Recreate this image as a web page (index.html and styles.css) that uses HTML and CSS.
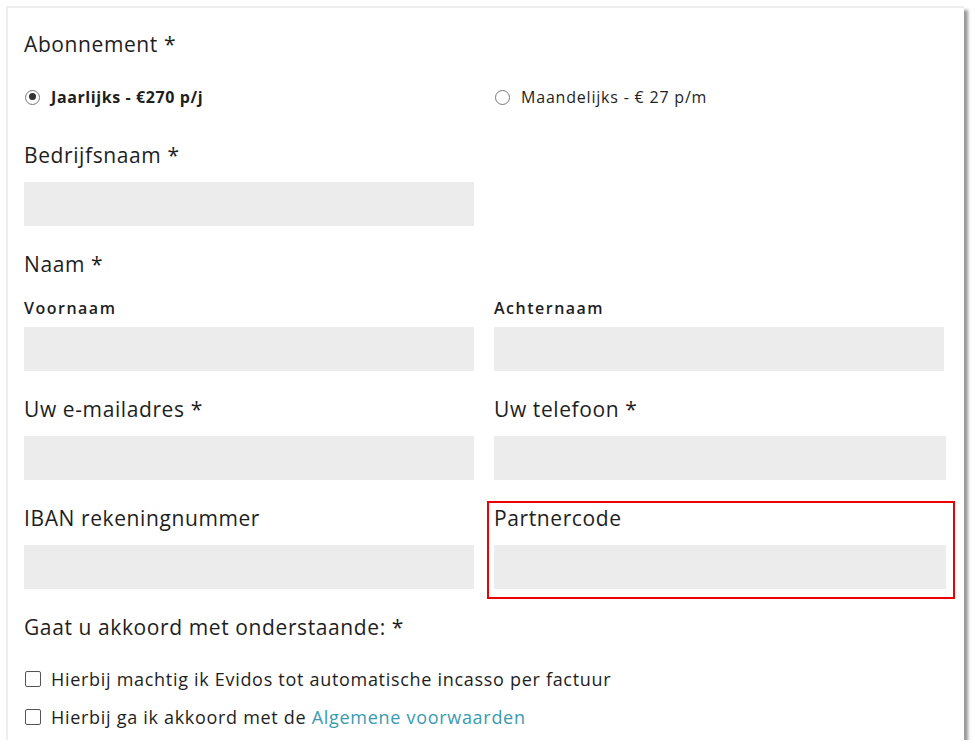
FILE: index.html
```html
<!DOCTYPE html>
<html lang="nl">
<head>
    <meta charset="UTF-8">
    <meta name="viewport" content="width=device-width, initial-scale=1.0">
    <title>Aanmelden</title>
    <link rel="stylesheet" href="styles.css">
</head>
<body>
    <div class="panel">
        <form class="form">
            <div class="field full">
                <label class="label">Abonnement *</label>
                <div class="choices">
                    <label class="choice checked"><span class="radio"></span><b>Jaarlijks - €270 p/j</b></label>
                    <label class="choice"><span class="radio"></span>Maandelijks - € 27 p/m</label>
                </div>
            </div>

            <div class="field">
                <label class="label">Bedrijfsnaam *</label>
                <div class="input"></div>
            </div>
            <div class="field"></div>

            <div class="field full">
                <label class="label">Naam *</label>
                <div class="pair">
                    <div>
                        <label class="sublabel">Voornaam</label>
                        <div class="input"></div>
                    </div>
                    <div>
                        <label class="sublabel">Achternaam</label>
                        <div class="input"></div>
                    </div>
                </div>
            </div>

            <div class="field">
                <label class="label">Uw e-mailadres *</label>
                <div class="input"></div>
            </div>
            <div class="field wide">
                <label class="label">Uw telefoon *</label>
                <div class="input"></div>
            </div>

            <div class="field">
                <label class="label">IBAN rekeningnummer</label>
                <div class="input"></div>
            </div>
            <div class="field wide marked">
                <label class="label">Partnercode</label>
                <div class="input"></div>
            </div>

            <div class="field full">
                <label class="label">Gaat u akkoord met onderstaande: *</label>
                <div class="checks">
                    <label class="check"><span class="box"></span>Hierbij machtig ik Evidos tot automatische incasso per factuur</label>
                    <label class="check"><span class="box"></span>Hierbij ga ik akkoord met de&nbsp;<a href="#">Algemene voorwaarden</a></label>
                </div>
            </div>
        </form>
    </div>
</body>
</html>
```

FILE: styles.css
```css
body {
    margin: 0;
    background: #fff;
    font-family: 'Open Sans', sans-serif;
    color: #1e1e1e;
}
.panel {
    margin: 6px 0 0 6px;
    width: 956px;
    height: 732px;
    background: #fff;
    border-top: 2px solid #eee;
    border-left: 2px solid #eee;
    box-shadow: 4px 4px 3px #9a9a9a;
    overflow: hidden;
}
.form {
    display: grid;
    grid-template-columns: 450px 450px;
    column-gap: 20px;
    row-gap: 23px;
    padding: 21px 0 0 16px;
}
.field {
    position: relative;
}
.full {
    grid-column: 1 / 3;
}
.label {
    display: block;
    font-size: 21px;
    letter-spacing: 0.6px;
    line-height: 30px;
    margin-bottom: 12px;
}
.input {
    height: 44px;
    background: #ececec;
}
.wide .input {
    margin-right: -2px;
}
/* red annotation frame round the partner code */
.marked::before {
    content: "";
    position: absolute;
    top: -2px;
    left: -7px;
    right: -11px;
    bottom: -10px;
    border: 2px solid #e00;
}
.choices {
    display: grid;
    grid-template-columns: 470px 1fr;
    margin-top: 23px;
    margin-bottom: 5px;
}
.choice {
    display: flex;
    align-items: center;
    font-size: 16px;
    letter-spacing: 0.8px;
    line-height: 30px;
}
.choice b {
    letter-spacing: 0.6px;
}
.radio {
    box-sizing: border-box;
    width: 15px;
    height: 15px;
    border: 1.5px solid #777;
    border-radius: 50%;
    margin: 0 11px 0 1px;
    position: relative;
}
.checked .radio::after {
    content: "";
    position: absolute;
    left: 2.5px;
    top: 2.5px;
    width: 7px;
    height: 7px;
    border-radius: 50%;
    background: #333;
}
.pair {
    display: grid;
    grid-template-columns: 450px 450px;
    column-gap: 20px;
    margin-top: 17px;
}
.sublabel {
    display: block;
    font-size: 16px;
    font-weight: 600;
    letter-spacing: 1.5px;
    line-height: 24px;
    margin-bottom: 7px;
}
.checks {
    margin-top: 18px;
}
.check {
    display: flex;
    align-items: center;
    font-size: 18px;
    letter-spacing: 0.7px;
    line-height: 38px;
}
.box {
    box-sizing: border-box;
    width: 16px;
    height: 16px;
    border: 1.5px solid #555;
    border-radius: 2px;
    margin: 0 10px 0 1px;
}
.check a {
    color: #3a9ab0;
    text-decoration: none;
}
```
